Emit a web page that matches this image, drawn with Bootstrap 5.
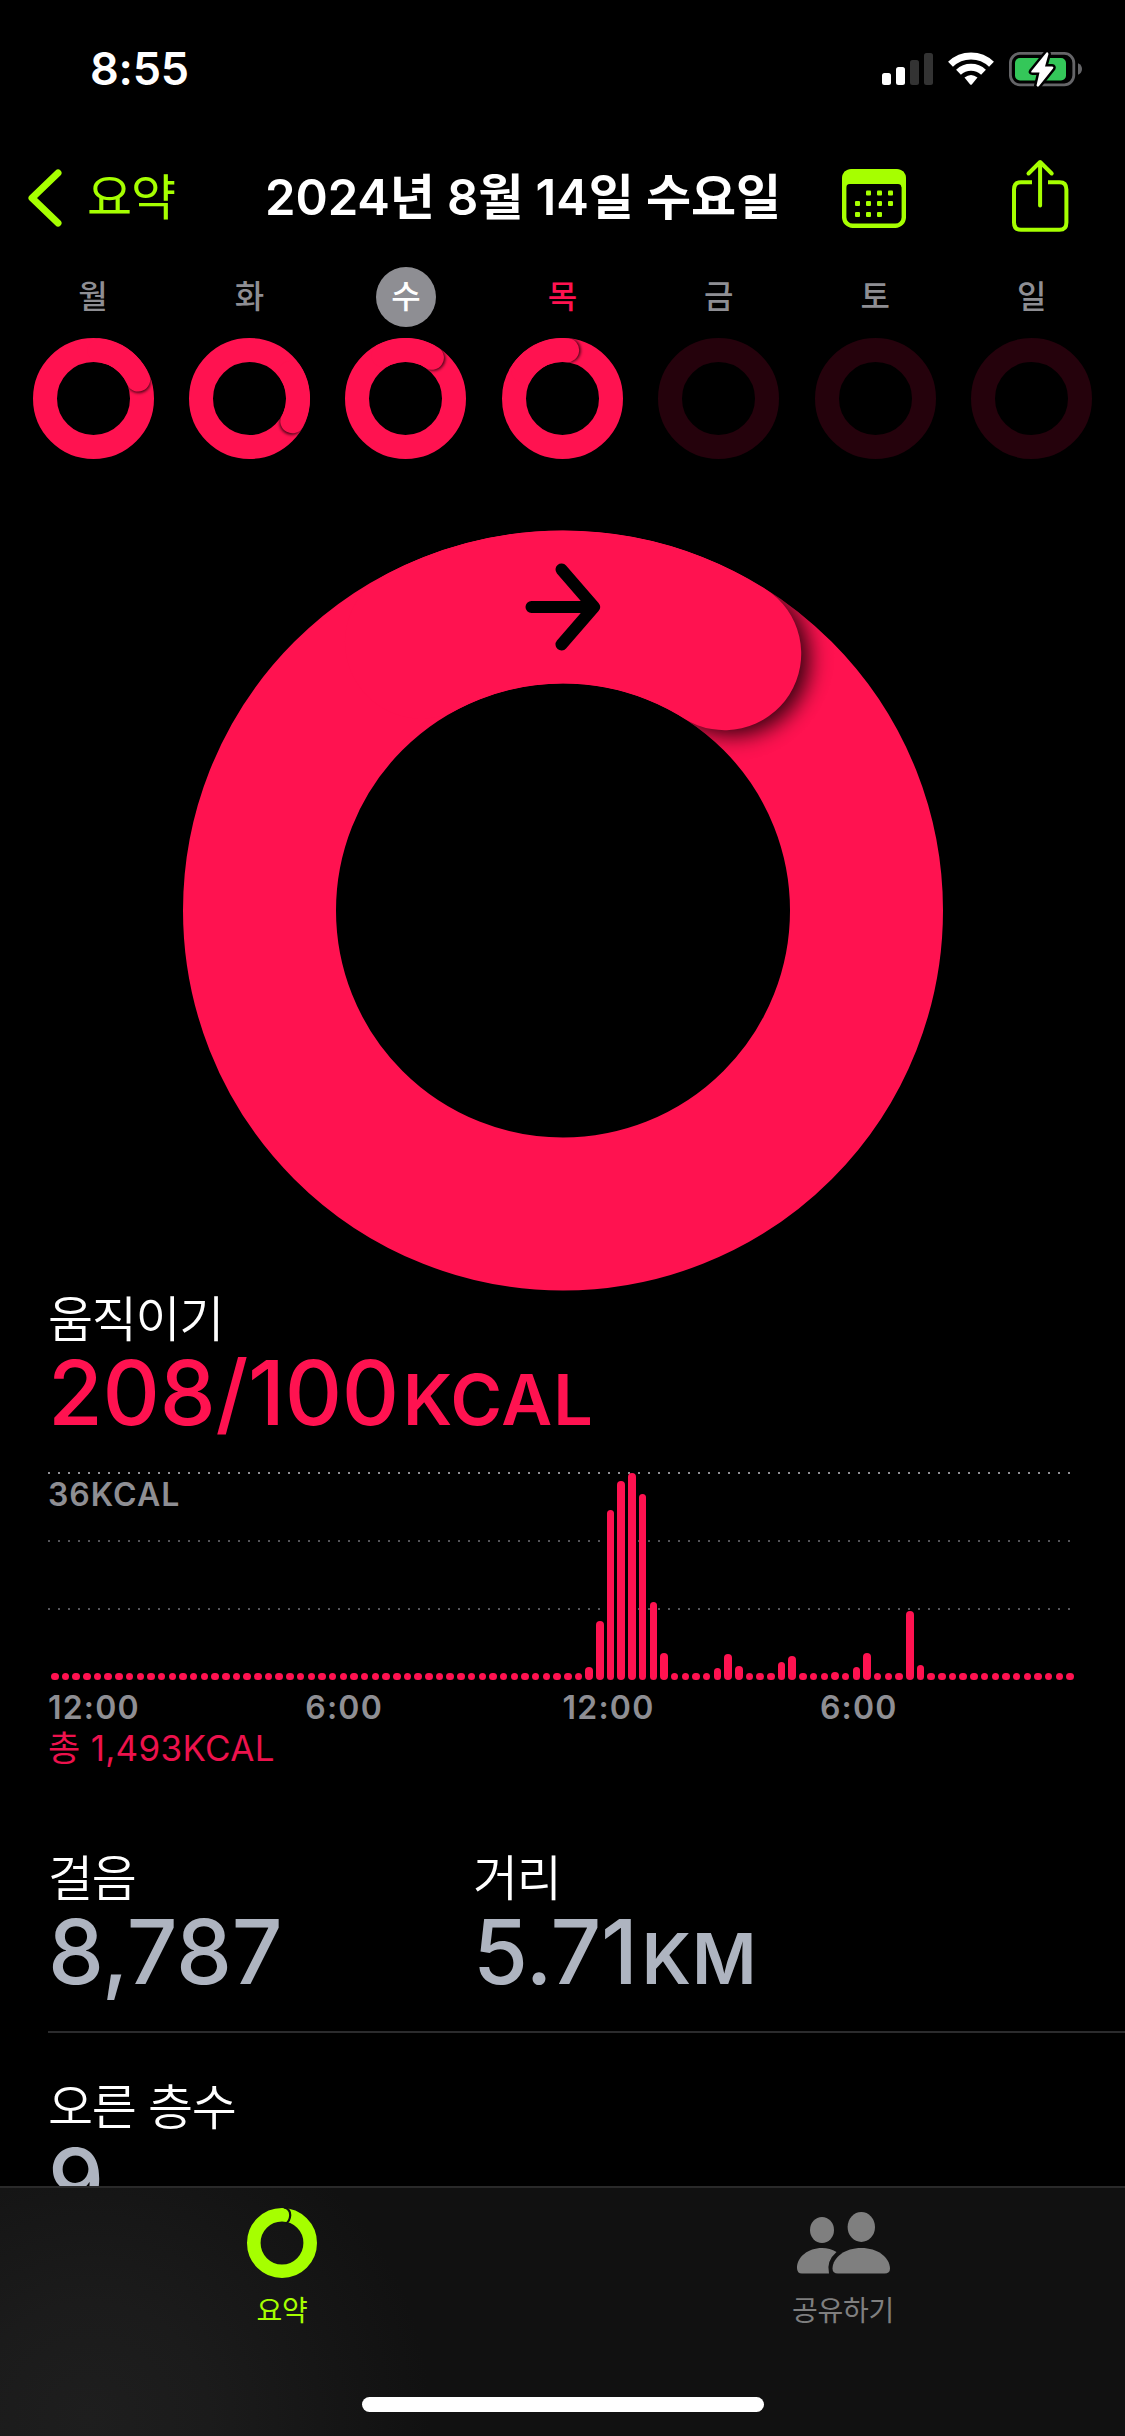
<!DOCTYPE html>
<html lang="ko" data-bs-theme="dark">
<head>
<meta charset="utf-8">
<meta name="viewport" content="width=device-width, initial-scale=1">
<title>요약</title>
<link href="https://cdn.jsdelivr.net/npm/bootstrap@5.3.0/dist/css/bootstrap.min.css" rel="stylesheet">
<style>
  :root { --lime: #a6ff00; --move: #ff1250; --dim: #8e8e93; --steel: #aeb4c0; }
  body { background: #000; color: #fff; font-family: Inter, "Noto Sans CJK KR", sans-serif; line-height: 1; }
  .phone { width: 1125px; height: 2436px; background: #000; }
  svg { display: block; flex: none; }
  .lime { color: var(--lime); }
  .move { color: var(--move); }
  .dim { color: var(--dim); }

  .status-strip { height: 132px; padding: 0 43px 0 90px; }
  .clock { font-size: 45px; font-weight: 600; line-height: 54px; margin-top: 42px; letter-spacing: -.2px; }
  .status-icons { margin-top: 46px; }

  .title-bar { height: 132px; padding: 0 56px 0 27px; }
  .back-link { font-size: 49px; line-height: 60px; letter-spacing: -1px; width: 238px; }
  .day-title { font-size: 49px; font-weight: 600; line-height: 60px; width: 577px; letter-spacing: -.1px; white-space: nowrap; }

  .week { height: 266px; padding: 3px 15px 0 14.8px; }
  .week-day { flex: 1 1 0; }
  .day-name { width: 60px; height: 60px; font-size: 32px; font-weight: 500; margin-bottom: 11px; padding-bottom: 1px; }
  .day-name.chosen { background: var(--dim); color: #fff; }

  .big-ring { height: 760px; }
  .content { padding-left: 48px; }
  .label { font-size: 49px; font-weight: 350; line-height: 60px; height: 58px; letter-spacing: -1.3px; }
  .figure { font-size: 89px; font-weight: 500; line-height: 90px; height: 90px; white-space: nowrap; letter-spacing: -.3px; }
  .unit { font-size: 70px; font-weight: 600; letter-spacing: 1px; margin-left: 4px; }
  .steel { color: var(--steel); }

  .chart { width: 1026px; height: 208px; margin-top: 34px; }
  .guide { height: 2px; width: 1025px; background: repeating-linear-gradient(90deg, #55555a 0 2px, transparent 2px 10px); }
  .guide.top { background: repeating-linear-gradient(90deg, #909095 0 2px, transparent 2px 10px); }
  .guide.lower { margin-top: 66px; }
  .bars { inset: 0 0 0 3px; }
  .bar { width: 7.5px; border-radius: 4px; background: var(--move); height: 7.5px; }
  .peak { font-size: 32px; font-weight: 600; line-height: 36px; height: 66px; padding-top: 3px; letter-spacing: 1px; }
  .hours { font-size: 32px; font-weight: 600; line-height: 36px; margin-top: 10px; letter-spacing: 1.2px; }
  .hours span { width: 257.3px; }
  .total { font-size: 35px; line-height: 44px; height: 44px; letter-spacing: .3px; color: #ed124d; }

  .stat-pair { height: 182px; margin-top: 79px; }
  .stat { width: 425px; }
  .divider { height: 2px; background: #2b2b2d; }
  .floors { height: 153px; padding-top: 45px; overflow: hidden; }

  .tabs { height: 250px; border-top: 2px solid #2a2a2a; background: radial-gradient(ellipse 340px 330px at 90px 230px, #1e1e1e 0, #1b1b1b 35%, #111 100%), #111; }
  .tab-item { width: 562px; font-size: 28px; line-height: 34px; height: 209px; padding-top: 19px; color: #7f7f7f; letter-spacing: -.2px; }
  .tab-item.active { color: var(--lime); padding-left: 2px; }
  .tab-item svg { margin-bottom: 15px; }
  .home-bar { width: 402px; height: 15px; border-radius: 8px; background: #fff; }
</style>
</head>
<body>
<svg width="0" height="0" class="position-absolute" aria-hidden="true">
  <defs>
    <filter id="softSmall" x="-50%" y="-50%" width="200%" height="200%"><feGaussianBlur stdDeviation="1.6"/></filter>
    <mask id="bandSmall" maskUnits="userSpaceOnUse" x="0" y="0" width="121" height="121"><circle cx="60.5" cy="60.5" r="48.5" fill="none" stroke="#fff" stroke-width="24"/></mask>
    <g id="closed"><circle cx="60.5" cy="60.5" r="48.5" fill="none" stroke="#ff1250" stroke-width="24"/></g>
    <g id="tip" mask="url(#bandSmall)">
      <circle cx="62" cy="12" r="12" fill="#000" opacity=".75" filter="url(#softSmall)"/>
      <path d="M18.5 36.25A48.5 48.5 0 0 1 60.5 12" fill="none" stroke="#ff1250" stroke-width="24" stroke-linecap="round"/>
    </g>
    <g id="future"><circle cx="60.5" cy="60.5" r="48.5" fill="none" stroke="#25020c" stroke-width="24"/></g>
  </defs>
</svg>

<div class="phone d-flex flex-column overflow-hidden">
  <header class="status-strip d-flex justify-content-between align-items-start">
    <div class="clock">8:55</div>
    <svg class="status-icons" width="200" height="46" viewBox="882 46 200 46">
      <rect x="882" y="73" width="9" height="12" rx="2.5" fill="#fff"/>
      <rect x="896" y="67" width="9" height="18" rx="2.5" fill="#fff"/>
      <rect x="910" y="60" width="9" height="25" rx="2.5" fill="#333"/>
      <rect x="924" y="53" width="9" height="32" rx="2.5" fill="#333"/>
      <g fill="none" stroke="#fff" stroke-width="7">
        <path d="M950.5 64.3A29.5 29.5 0 0 1 991.5 64.3"/>
        <path d="M958.5 72.3A18.3 18.3 0 0 1 983.5 72.3"/>
      </g>
      <path d="M964.5 77.5Q971 72.5 977.5 77.5L971.8 84.4Q971 85.3 970.2 84.4Z" fill="#fff"/>
      <rect x="1010.4" y="53.4" width="63.4" height="31.4" rx="9.5" fill="none" stroke="#656568" stroke-width="2.8"/>
      <path d="M1078 63.2Q1082 65 1082 69Q1082 73 1078 74.8Z" fill="#656568"/>
      <rect x="1015" y="58" width="51" height="22.5" rx="5" fill="#34c759"/>
      <path d="M1046.5 52.5L1031.5 71Q1030.5 72.5 1032.5 72.5H1039.5L1036.5 85.5Q1037.5 87.5 1039 86L1053 68.5Q1054 66.7 1052 66.5H1045L1048.5 54Q1048 51.5 1046.5 52.5Z" fill="#fff" stroke="#000" stroke-width="5" stroke-linejoin="round" paint-order="stroke"/>
    </svg>
  </header>

  <nav class="title-bar d-flex align-items-center">
    <a class="back-link lime d-flex align-items-center text-decoration-none" href="#">
      <svg class="me-4" width="36" height="60" viewBox="0 0 36 60" fill="none" stroke="currentColor" stroke-width="7" stroke-linecap="round" stroke-linejoin="round"><path d="M31 5L5 30L31 55"/></svg>
      <span>요약</span>
    </a>
    <div class="day-title">2024년 8월 14일 수요일</div>
    <svg class="lime" width="64" height="60" viewBox="842 168 64 60">
      <rect x="844.2" y="171.3" width="59.600" height="54.5" rx="8.5" fill="none" stroke="currentColor" stroke-width="4.400"/>
      <path d="M842 183V179Q842 169 852 169H896Q906 169 906 179V190L901.500 187Q901 184 898 184H850Q846 184 846 188Z" fill="currentColor"/>
      <g fill="currentColor">
        <rect x="866" y="190.500" width="5" height="5" rx="1"/><rect x="877" y="190.500" width="5" height="5" rx="1"/><rect x="888" y="190.500" width="5" height="5" rx="1"/>
        <rect x="855" y="201" width="5" height="5" rx="1"/><rect x="866" y="201" width="5" height="5" rx="1"/><rect x="877" y="201" width="5" height="5" rx="1"/><rect x="888" y="201" width="5" height="5" rx="1"/>
        <rect x="855" y="212" width="5" height="5" rx="1"/><rect x="866" y="212" width="5" height="5" rx="1"/><rect x="877" y="212" width="5" height="5" rx="1"/>
      </g>
    </svg>
    <svg class="lime ms-auto mb-1" width="58" height="76" viewBox="1011 158 58 76" fill="none" stroke="currentColor" stroke-width="4">
      <path d="M1032 182.300H1021Q1014 182.300 1014 189.500V222.500Q1014 229.800 1021 229.800H1059.500Q1066.400 229.800 1066.400 222.500V189.500Q1066.400 182.300 1059.500 182.300H1048"/>
      <path d="M1040.100 205.500V162.500M1028.500 173.500L1040.100 162L1051.700 173.500" stroke-linecap="round" stroke-linejoin="round"/>
    </svg>
  </nav>

  <section class="week d-flex">
    <div class="week-day d-flex flex-column align-items-center"><div class="day-name dim d-flex align-items-center justify-content-center">월</div><svg width="121" height="121"><use href="#closed"/><use href="#tip" transform="rotate(67 60.5 60.5)"/></svg></div>
    <div class="week-day d-flex flex-column align-items-center"><div class="day-name dim d-flex align-items-center justify-content-center">화</div><svg width="121" height="121"><use href="#closed"/><use href="#tip" transform="rotate(118 60.5 60.5)"/></svg></div>
    <div class="week-day d-flex flex-column align-items-center"><div class="day-name chosen rounded-circle d-flex align-items-center justify-content-center">수</div><svg width="121" height="121"><use href="#closed"/><use href="#tip" transform="rotate(33 60.5 60.5)"/></svg></div>
    <div class="week-day d-flex flex-column align-items-center"><div class="day-name move d-flex align-items-center justify-content-center">목</div><svg width="121" height="121"><use href="#closed"/><use href="#tip" transform="rotate(5.500 60.5 60.5)"/></svg></div>
    <div class="week-day d-flex flex-column align-items-center"><div class="day-name dim d-flex align-items-center justify-content-center">금</div><svg width="121" height="121"><use href="#future"/></svg></div>
    <div class="week-day d-flex flex-column align-items-center"><div class="day-name dim d-flex align-items-center justify-content-center">토</div><svg width="121" height="121"><use href="#future"/></svg></div>
    <div class="week-day d-flex flex-column align-items-center"><div class="day-name dim d-flex align-items-center justify-content-center">일</div><svg width="121" height="121"><use href="#future"/></svg></div>
  </section>

  <div class="big-ring d-flex justify-content-center">
    <svg width="760" height="761" viewBox="0 0 760 761">
      <defs>
        <filter id="softBig" x="-50%" y="-50%" width="200%" height="200%"><feGaussianBlur stdDeviation="11"/></filter>
        <mask id="bandBig" maskUnits="userSpaceOnUse" x="0" y="0" width="760" height="761"><circle cx="380" cy="380.5" r="303.500" fill="none" stroke="#fff" stroke-width="153"/></mask>
      </defs>
      <circle cx="380" cy="380.5" r="303.5" fill="none" stroke="#ff1250" stroke-width="153"/>
      <g mask="url(#bandBig)"><g transform="rotate(32.2 380 380.5)">
        <circle cx="389" cy="77" r="77" fill="#000" opacity=".82" filter="url(#softBig)"/>
        <path d="M117.200 228.750A303.500 303.500 0 0 1 380 77" fill="none" stroke="#ff1250" stroke-width="153" stroke-linecap="round"/>
      </g></g>
      <path d="M348.500 77H409M378.500 39.500L411 77L378.500 114.500" fill="none" stroke="#000" stroke-width="12" stroke-linecap="round" stroke-linejoin="round"/>
    </svg>
  </div>

  <main class="content flex-grow-1 d-flex flex-column">
    <div class="label">움직이기</div>
    <div class="figure move">208/100<span class="unit">KCAL</span></div>

    <div class="chart position-relative d-flex flex-column">
      <div class="guide top"></div>
      <div class="peak dim">36KCAL</div>
      <div class="guide"></div>
      <div class="guide lower"></div>
      <div class="bars position-absolute d-flex align-items-end justify-content-between" id="bars"></div>
    </div>
    <div class="hours dim d-flex"><span>12:00</span><span>6:00</span><span>12:00</span><span>6:00</span></div>
    <div class="total">총 1,493KCAL</div>

    <div class="stat-pair d-flex">
      <div class="stat"><div class="label">걸음</div><div class="figure steel">8,787</div></div>
      <div class="stat"><div class="label">거리</div><div class="figure steel">5.71<span class="unit">KM</span></div></div>
    </div>
    <div class="divider"></div>
    <div class="floors"><div class="label">오른 층수</div><div class="figure steel">9</div></div>
  </main>

  <footer class="tabs d-flex flex-column align-items-center">
    <div class="d-flex w-100">
      <a class="tab-item active d-flex flex-column align-items-center text-decoration-none" href="#">
        <svg width="72" height="72" viewBox="0 0 72 72" fill="none">
          <circle cx="36" cy="36" r="28.200" stroke="#a6ff00" stroke-width="13.600"/>
          <path d="M38 .5Q44.500 2 44.200 8.500Q43.800 14 40 16.500" stroke="#111" stroke-width="2.200"/>
        </svg>
        <span>요약</span>
      </a>
      <a class="tab-item d-flex flex-column align-items-center text-decoration-none" href="#">
        <svg width="94" height="72" viewBox="796 2207 94 72" fill="#7f7f7f">
          <ellipse cx="822" cy="2230" rx="12" ry="13"/>
          <path d="M797 2268C797 2257 808 2248 822 2248Q830 2248 836.500 2252Q826 2261 829 2273.500H802Q797 2273.500 797 2268Z"/>
          <ellipse cx="861.300" cy="2227" rx="13.700" ry="15"/>
          <path d="M832.500 2268.500C833 2257 845 2248 861.300 2248S889.500 2257 890 2268.500Q890 2273.500 884.500 2273.500H838Q832.500 2273.500 832.500 2268.500Z"/>
        </svg>
        <span>공유하기</span>
      </a>
    </div>
    <div class="home-bar"></div>
  </footer>
</div>
<script src="https://cdn.jsdelivr.net/npm/bootstrap@5.3.0/dist/js/bootstrap.bundle.min.js"></script>
<script>
  // Quarter-hour bars: only slots above the resting height are listed
  const active = {50:13.3, 51:59, 52:170, 53:199, 54:207, 55:186, 56:78, 57:27, 62:12, 63:26, 64:14.5, 68:18, 69:24.5, 73:8.3, 75:13.3, 76:27, 80:69.5, 81:15};
  const bars = document.getElementById('bars');
  for (let i = 0; i < 96; i++) {
    const bar = document.createElement('div');
    bar.className = 'bar';
    if (active[i]) bar.style.height = active[i] + 'px';
    bars.appendChild(bar);
  }
</script>
</body>
</html>
